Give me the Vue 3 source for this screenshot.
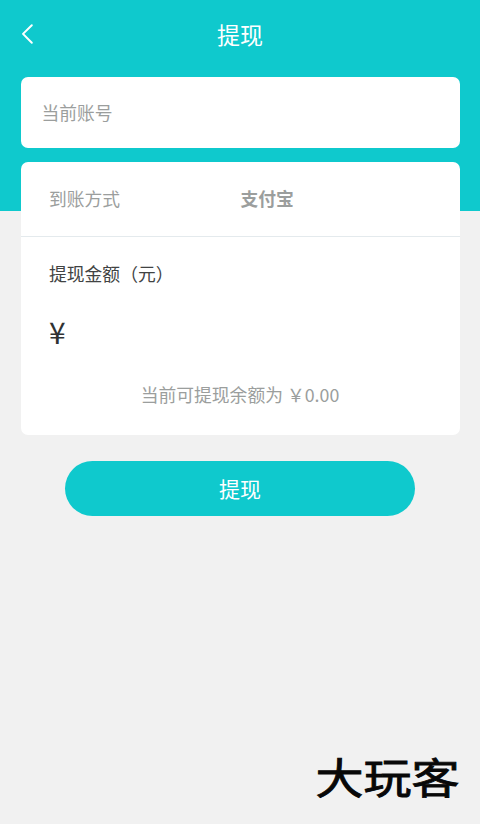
<script setup>
const title = '提现'
const method = '支付宝'
const balance = '0.00'
</script>

<template>
  <main class="screen">
    <header class="bar">
      <svg class="back" viewBox="0 0 14 22" width="14" height="22">
        <path d="M10.8 2.2 2 10.9 10.8 19.8" fill="none" stroke="#fff" stroke-width="2" stroke-linecap="round" stroke-linejoin="round" />
      </svg>
      <h1>{{ title }}</h1>
    </header>

    <section class="card account">当前账号</section>

    <section class="card details">
      <div class="method">
        <span class="label">到账方式</span>
        <strong>{{ method }}</strong>
      </div>
      <div class="amount">
        <div class="caption">提现金额（元）</div>
        <div class="currency">¥</div>
        <div class="balance"><span>当前可提现余额为</span><span class="yen">￥</span><span class="num">{{ balance }}</span></div>
      </div>
    </section>

    <button class="submit">{{ title }}</button>

    <footer><span class="brand">大玩客</span></footer>
  </main>
</template>

<style>
body {
  margin: 0;
  background: #f1f1f1;
}
</style>

<style scoped>
.screen {
  box-sizing: border-box;
  display: flex;
  flex-direction: column;
  height: 824px;
  padding: 0 20.5px;
  overflow: hidden;
  background: linear-gradient(#0fc9cd 0 211.3px, #f1f1f1 211.3px);
  font-family: "Noto Sans CJK SC", sans-serif;
  font-size: 17.8px;
  color: #9b9e9d;
}
.bar {
  display: grid;
  grid-template-columns: 14px 1fr 14px;
  align-items: center;
  height: 67.4px;
  margin-bottom: 9.9px;
}
.back {
  display: block;
}
h1 {
  margin: 0;
  color: #fff;
  font-size: 23px;
  font-weight: 400;
  line-height: 34px;
  text-align: center;
}
.card {
  flex: none;
  box-sizing: border-box;
  background: #fff;
  border-radius: 7px;
}
.account {
  height: 71.2px;
  padding-left: 21px;
  line-height: 71px;
}
.details {
  height: 273.2px;
  margin-top: 13.3px;
}
.method {
  display: grid;
  grid-template-columns: 191.5px 1fr;
  box-sizing: border-box;
  height: 75.5px;
  padding-left: 28.5px;
  border-bottom: 1px solid #e4eaed;
  line-height: 73px;
}
strong {
  font-weight: 700;
}
.amount {
  padding: 21px 28.5px 0;
}
.caption {
  color: #414343;
  line-height: 30px;
}
.currency {
  margin-top: 19px;
  color: #303233;
  font-size: 30px;
  line-height: 48px;
}
.balance {
  display: flex;
  justify-content: center;
  margin-top: 24px;
  line-height: 30px;
}
.yen {
  margin-left: 4px;
}
.submit {
  flex: none;
  align-self: center;
  width: 350px;
  height: 55.5px;
  margin: 26px 0 0;
  padding: 0;
  border: 0;
  border-radius: 28px;
  background: #0fc9cd;
  color: #fff;
  font: 400 21px/55px "Noto Sans CJK SC", sans-serif;
}
footer {
  display: flex;
  justify-content: flex-end;
  margin-top: auto;
  padding-bottom: 24px;
}
.brand {
  color: #080808;
  font-size: 48px;
  font-weight: 400;
  line-height: 48px;
  -webkit-text-stroke: 1px #080808;
  transform: scaleY(0.87);
}
</style>
